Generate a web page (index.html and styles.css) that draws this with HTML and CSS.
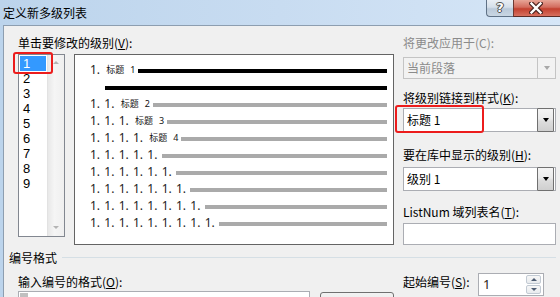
FILE: index.html
```html
<!DOCTYPE html>
<html lang="zh-CN">
<head>
<meta charset="utf-8">
<title>定义新多级列表</title>
<link rel="stylesheet" href="styles.css">
</head>
<body>
<div class="window">
  <div class="titlebar">
    <span class="title">定义新多级列表</span>
    <div class="caption-btns">
      <div class="btn-help">?</div>
      <div class="btn-close">
        <svg width="14" height="12" viewBox="0 0 14 12">
          <path d="M2.5 1.5 L11.5 10.5 M11.5 1.5 L2.5 10.5" stroke="#4b2420" stroke-width="4.6" stroke-linecap="square" fill="none"/>
          <path d="M2.5 1.5 L11.5 10.5 M11.5 1.5 L2.5 10.5" stroke="#ffffff" stroke-width="2.4" stroke-linecap="square" fill="none"/>
        </svg>
      </div>
    </div>
  </div>
  <div class="body">
    <div class="top">
      <div class="left">
        <div class="label">单击要修改的级别(<u>V</u>):</div>
        <div class="left-row">
          <div class="listbox">
            <div class="items">
              <div class="item sel">1</div>
              <div class="item">2</div>
              <div class="item">3</div>
              <div class="item">4</div>
              <div class="item">5</div>
              <div class="item">6</div>
              <div class="item">7</div>
              <div class="item">8</div>
              <div class="item">9</div>
            </div>
            <div class="vscroll">
              <span class="sarrow up"></span>
              <span class="sarrow down"></span>
            </div>
          </div>
          <div class="preview">
            <div class="row"><span class="u">1.</span><span class="hd">标题<i>1</i></span><span class="bar black"></span></div>
            <div class="row"><span class="bar black cont"></span></div>
            <div class="row"><span class="u">1.</span><span class="u">1.</span><span class="hd">标题<i>2</i></span><span class="bar"></span></div>
            <div class="row"><span class="u">1.</span><span class="u">1.</span><span class="u">1.</span><span class="hd">标题<i>3</i></span><span class="bar"></span></div>
            <div class="row"><span class="u">1.</span><span class="u">1.</span><span class="u">1.</span><span class="u">1.</span><span class="hd">标题<i>4</i></span><span class="bar"></span></div>
            <div class="row"><span class="u">1.</span><span class="u">1.</span><span class="u">1.</span><span class="u">1.</span><span class="u">1.</span><span class="bar"></span></div>
            <div class="row"><span class="u">1.</span><span class="u">1.</span><span class="u">1.</span><span class="u">1.</span><span class="u">1.</span><span class="u">1.</span><span class="bar"></span></div>
            <div class="row"><span class="u">1.</span><span class="u">1.</span><span class="u">1.</span><span class="u">1.</span><span class="u">1.</span><span class="u">1.</span><span class="u">1.</span><span class="bar"></span></div>
            <div class="row"><span class="u">1.</span><span class="u">1.</span><span class="u">1.</span><span class="u">1.</span><span class="u">1.</span><span class="u">1.</span><span class="u">1.</span><span class="u">1.</span><span class="bar"></span></div>
            <div class="row"><span class="u">1.</span><span class="u">1.</span><span class="u">1.</span><span class="u">1.</span><span class="u">1.</span><span class="u">1.</span><span class="u">1.</span><span class="u">1.</span><span class="u">1.</span><span class="bar"></span></div>
          </div>
        </div>
      </div>
      <div class="right">
        <div class="label disabled">将更改应用于(C):</div>
        <div class="combo combo-disabled"><span class="ctext">当前段落</span><span class="dsep"><span class="arrow grey"></span></span></div>
        <div class="label l2">将级别链接到样式(<u>K</u>):</div>
        <div class="combo c2"><span class="ctext">标题 1</span><span class="dd"><span class="arrow"></span></span></div>
        <div class="label l3">要在库中显示的级别(<u>H</u>):</div>
        <div class="combo c3"><span class="ctext">级别 1</span><span class="dd"><span class="arrow"></span></span></div>
        <div class="label l4">ListNum 域列表名(<u>T</u>):</div>
        <div class="textbox"></div>
      </div>
    </div>
    <div class="group-title"><span>编号格式</span><div class="rule"></div></div>
    <div class="format">
      <div class="fmt-left">
        <div class="label fl">输入编号的格式(<u>O</u>):</div>
        <div class="fmt-inputs">
          <div class="fmt-input"><span class="field"></span></div>
          <div class="font-btn"></div>
        </div>
      </div>
      <div class="start">
        <span class="label slabel">起始编号(<u>S</u>):</span>
        <div class="spin">
          <span class="spin-val">1</span>
          <div class="spin-btns">
            <span class="sbtn"><span class="sa up"></span></span>
            <span class="sbtn"><span class="sa down"></span></span>
          </div>
        </div>
      </div>
    </div>
  </div>
  <div class="mark mark1"></div>
  <div class="mark mark2"></div>
</div>
</body>
</html>
```

FILE: styles.css
```css
* { box-sizing: border-box; }
html, body { margin: 0; padding: 0; }
body {
  width: 560px;
  height: 297px;
  overflow: hidden;
  font-family: "Noto Sans CJK SC", "Noto Sans", sans-serif;
  font-size: 12px;
  color: #000;
  background: #f0f0f0;
}
u { text-decoration: underline; text-underline-offset: 1px; }

.window {
  width: 560px;
  height: 297px;
  display: flex;
  flex-direction: column;
  background: linear-gradient(90deg, #bcd4ec 0%, #c8dcf1 50%, #d6e6f7 100%);
  position: relative;
  overflow: hidden;
}

/* title bar */
.titlebar {
  height: 25px;
  flex: none;
  display: flex;
  align-items: flex-start;
}
.title {
  padding-left: 3px;
  line-height: 25px;
  font-size: 12px;
}
.caption-btns {
  margin-left: auto;
  display: flex;
}
.btn-help {
  width: 27px;
  height: 17px;
  border: 1px solid #5f7186;
  border-top: none;
  border-right: none;
  border-radius: 0 0 0 4px;
  background: linear-gradient(#e9eef4 0%, #d5dfea 45%, #bac9d9 55%, #c9d6e3 100%);
  color: #fff;
  font: bold 13px "DejaVu Sans", sans-serif;
  line-height: 15px;
  text-align: center;
  text-shadow: 0 0 1px #333, 1px 0 0 #555, -1px 0 0 #555, 0 1px 0 #555, 0 -1px 0 #555;
}
.btn-close {
  width: 47px;
  height: 17px;
  border-bottom: 1px solid #5b2a24;
  border-left: 1px solid #6e3a33;
  background: linear-gradient(#e7a597 0%, #d36c5e 45%, #c3402f 55%, #d7705f 100%);
  display: flex;
  justify-content: center;
  align-items: center;
  padding-right: 3px;
}

/* body */
.body {
  flex: 1;
  margin-left: 3px;
  border-left: 1px solid #8d9eb0;
  border-top: 1px solid #8d9eb0;
  background: #f0f0f0;
  padding: 9px 4px 0 0;
  display: flex;
  flex-direction: column;
}
.label { line-height: 16px; white-space: nowrap; }
.label.disabled { color: #8b8b8b; }

.top {
  display: flex;
  padding-left: 14px;
}
.left { display: flex; flex-direction: column; }
.left .label { margin-bottom: 3px; }
.left-row { display: flex; gap: 9px; align-items: flex-start; }

.listbox {
  width: 47px;
  height: 183px;
  border: 1px solid #828790;
  background: #fff;
  display: flex;
  padding: 1px 0 1px 1px;
}
.items { width: 26px; }
.item {
  height: 15px;
  padding-left: 3px;
  font: 13px "Liberation Sans", sans-serif;
  line-height: 15px;
}
.item.sel { background: #3399ff; color: #fff; }
.vscroll {
  width: 17px;
  margin-left: 1px;
  margin-top: -1px;
  margin-bottom: -1px;
  background: linear-gradient(90deg, #e8e8e8 0%, #f5f5f5 40%, #efefef 100%);
  border-left: 1px solid #e2e2e2;
  position: relative;
  display: flex;
  flex-direction: column;
  justify-content: space-between;
  align-items: center;
  padding: 6px 0 7px;
}
.sarrow { width: 0; height: 0; border-left: 3px solid transparent; border-right: 3px solid transparent; }
.sarrow.up { border-bottom: 3px solid #b4b4b4; }
.sarrow.down { border-top: 3px solid #b4b4b4; }

.preview {
  width: 320px;
  height: 191px;
  border: 1px solid #646464;
  background: #fff;
  padding: 8px 6px 0 15px;
}
.row {
  display: flex;
  height: 17px;
  align-items: flex-start;
}
.u {
  flex: none;
  width: 14.33px;
  font: 12px "Noto Sans", sans-serif;
  line-height: 14px;
  color: #1c1c1c;
}
.hd {
  flex: none;
  width: 32px;
  margin-left: 2px;
  font-size: 9px;
  line-height: 14px;
  display: flex;
  color: #111;
}
.hd i {
  font-style: normal;
  font-family: "Noto Sans", sans-serif;
  margin-left: 6px;
}
.bar {
  flex: 1;
  height: 4px;
  margin-top: 6px;
  background: #aaaaaa;
}
.bar.black { background: #000; }
.bar.cont { margin-left: 15px; }

/* right column */
.right {
  width: 153px;
  margin-left: 9px;
  display: flex;
  flex-direction: column;
}
.combo {
  height: 24px;
  border: 1px solid #abadb3;
  background: #fff;
  display: flex;
  align-items: stretch;
}
.ctext { padding-left: 3px; line-height: 22px; flex: 1; }
.combo-disabled {
  height: 22px;
  margin-top: 6px;
  background: #f2f2f2;
  border-color: #c4c4c4;
  color: #8b8b8b;
}
.combo-disabled .ctext { line-height: 20px; }
.dsep {
  width: 18px;
  border-left: 1px solid #c4c4c4;
  display: flex;
  justify-content: center;
  align-items: center;
}
.dd {
  width: 17px;
  margin: -1px 1px -1px 0;
  border: 1px solid #707070;
  border-radius: 1px;
  background: linear-gradient(#f4f4f4 0%, #ebebeb 45%, #dddddd 55%, #cfcfcf 100%);
  display: flex;
  justify-content: center;
  align-items: center;
}
.arrow {
  width: 0;
  height: 0;
  border-left: 3.5px solid transparent;
  border-right: 3.5px solid transparent;
  border-top: 4px solid #000;
}
.arrow.grey { border-top-color: #a8a8a8; }
.l2 { margin-top: 11px; }
.c2 { margin-top: 2px; }
.l3 { margin-top: 15px; }
.c3 { margin-top: 4px; }
.l4 { margin-top: 13px; }
.textbox {
  margin-top: 3px;
  height: 22px;
  border: 1px solid #abadb3;
  background: #fff;
}

/* numbering format group */
.group-title {
  margin-top: 5px;
  padding-left: 5px;
  display: flex;
  align-items: center;
  line-height: 16px;
}
.rule {
  flex: 1;
  margin-left: 5px;
  margin-top: -1px;
  border-top: 1px solid #d5dfe5;
}
.format {
  margin-top: 8px;
  padding-left: 14px;
  display: flex;
}
.fmt-left { width: 385px; flex: none; }
.fl { margin-bottom: 1px; }
.fmt-inputs { display: flex; gap: 10px; }
.fmt-input {
  width: 292px;
  height: 20px;
  border: 1px solid #abadb3;
  background: #fff;
  padding: 1px;
}
.field { display: block; width: 8px; height: 16px; background: #c0c0c0; }
.font-btn {
  width: 74px;
  height: 20px;
  margin-top: 1px;
  border: 1px solid #707070;
  border-radius: 3px;
  background: linear-gradient(#f2f2f2, #e6e6e6);
}
.start { display: flex; align-items: flex-start; }
.slabel { width: 75px; }
.spin {
  width: 66px;
  height: 23px;
  margin-top: -1px;
  border: 1px solid #abadb3;
  background: #fff;
  display: flex;
}
.spin-val {
  flex: 1;
  padding-left: 4px;
  font: 13px "Noto Sans", sans-serif;
  line-height: 21px;
  color: #2a2116;
}
.spin-btns {
  width: 15px;
  margin: 1px 2px 1px 0;
  display: flex;
  flex-direction: column;
  gap: 1px;
}
.sbtn {
  flex: 1;
  border: 1px solid #c2cad3;
  border-radius: 2px;
  background: linear-gradient(#f7f7f7, #e8ebee);
  display: flex;
  justify-content: center;
  align-items: center;
}
.sa { width: 0; height: 0; border-left: 3px solid transparent; border-right: 3px solid transparent; }
.sa.up { border-bottom: 3px solid #4e5d73; }
.sa.down { border-top: 3px solid #4e5d73; }

/* red annotation marks */
.mark {
  position: absolute;
  border: 2.5px solid #ec1c1c;
  border-radius: 3px;
  pointer-events: none;
}
.mark1 { left: 13px; top: 52px; width: 40px; height: 22px; }
.mark2 { left: 395px; top: 105px; width: 89px; height: 28px; }
```
